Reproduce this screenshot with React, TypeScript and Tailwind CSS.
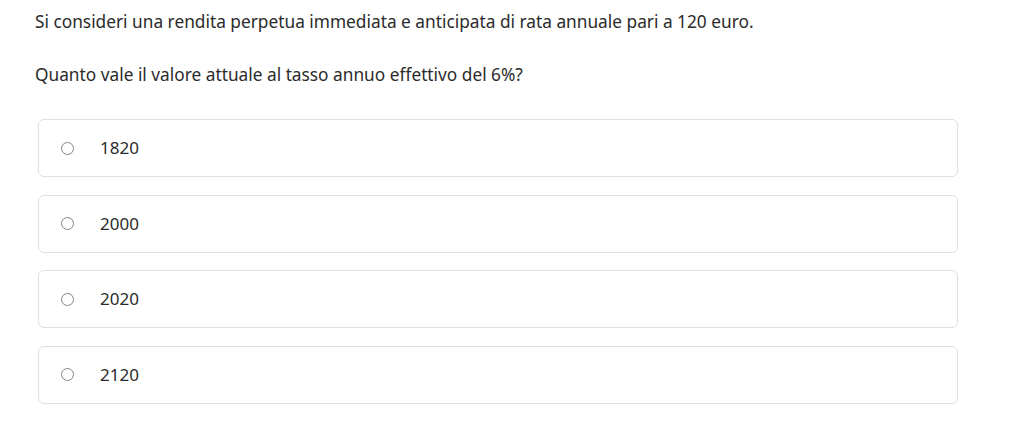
export default function App() {
  const options = ["1820", "2000", "2020", "2120"];
  return (
    <div className="w-[1024px] h-[425px] bg-white text-[#2b2b2b] font-['Segoe_UI','Noto_Sans',sans-serif]">
      <div className="pl-[35px] pr-[66px] pt-[10px]">
        <p className="text-[17.3px] leading-[24px]">
          Si consideri una rendita perpetua immediata e anticipata di rata annuale pari a 120 euro.
        </p>
        <p className="text-[17.3px] leading-[24px] mt-[29px]">
          Quanto vale il valore attuale al tasso annuo effettivo del 6%?
        </p>
        <div className="mt-[32px] ml-[3px] flex flex-col gap-[17.5px]">
          {options.map((o) => (
            <div
              key={o}
              className="h-[58px] border border-[#dbe1e8] rounded-[6px] flex items-center pl-[22px]"
            >
              <span className="w-[13px] h-[13px] rounded-full border-[1.5px] border-[#858585] shrink-0" />
              <span className="ml-[26px] text-[17px]">{o}</span>
            </div>
          ))}
        </div>
      </div>
    </div>
  );
}
